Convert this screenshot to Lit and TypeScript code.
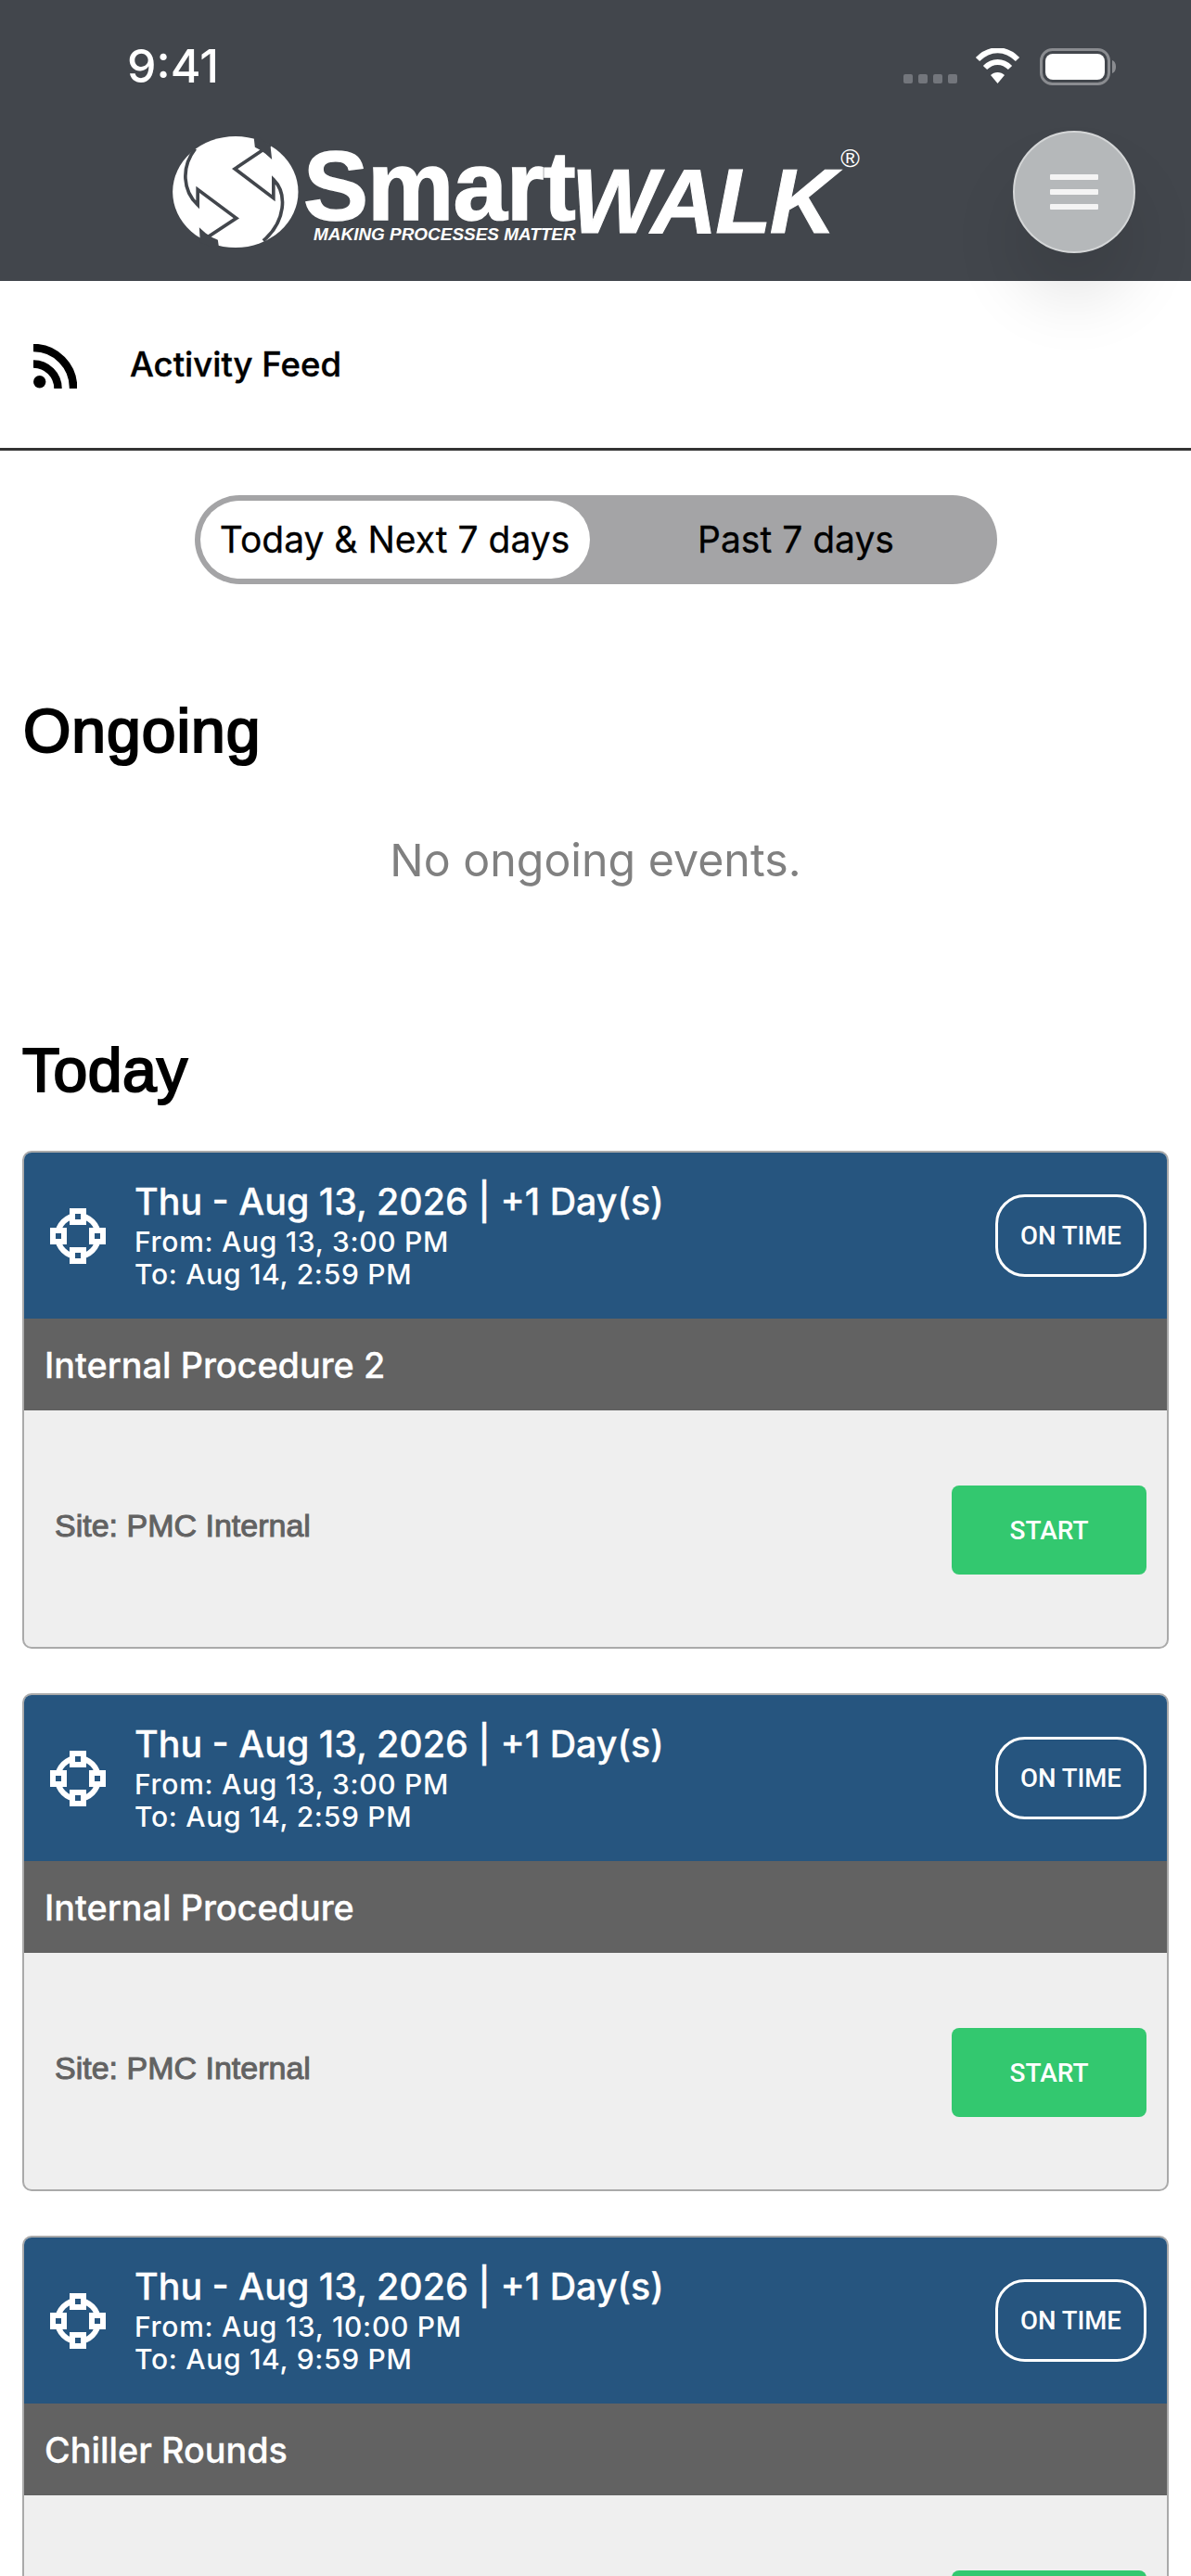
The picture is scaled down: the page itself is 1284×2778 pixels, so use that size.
import { LitElement, html, css, svg, nothing } from "lit";
import { customElement } from "lit/decorators.js";

const cards = [
  { from: "From: Aug 13, 3:00 PM", to: "To: Aug 14, 2:59 PM", name: "Internal Procedure 2", fold: false },
  { from: "From: Aug 13, 3:00 PM", to: "To: Aug 14, 2:59 PM", name: "Internal Procedure", fold: false },
  { from: "From: Aug 13, 10:00 PM", to: "To: Aug 14, 9:59 PM", name: "Chiller Rounds", fold: true },
];

const node = (x: number, y: number) => svg`
  <rect x=${x} y=${y} width="18" height="18" fill="#fff"></rect>
  <rect x=${x + 6} y=${y + 6} width="6" height="6" fill="#26557f"></rect>`;

@customElement("app-root")
export class AppRoot extends LitElement {
  static styles = css`
    :host { display: block; width: 1284px; height: 2778px; overflow: hidden; background: #fff; font-family: Inter, "Noto Sans", sans-serif; color: #000; }
    .top { position: relative; z-index: 2; height: 303px; background: #42464c; display: flex; flex-direction: column; }
    .status { height: 141px; display: flex; align-items: flex-start; padding: 41px 0 0 137px; box-sizing: border-box; }
    .time { font-size: 50px; line-height: 60px; color: #fff; font-weight: 500; }
    .status svg { margin: 11px 80px 0 auto; }
    .bar { display: flex; align-items: flex-start; padding-left: 186px; padding-right: 60px; }
    .logo { display: flex; align-items: flex-start; margin-top: 6px; }
    .word { display: flex; flex-direction: column; margin-left: 5px; font-family: "Liberation Sans", Arial, sans-serif; color: #fff; font-weight: 700; }
    .smart { font-size: 105px; line-height: 105px; height: 93px; margin-top: 1px; letter-spacing: -1px; -webkit-text-stroke: 1.5px #fff; }
    .tag { font-size: 18.95px; line-height: 20px; font-style: italic; margin: 2px 0 0 11px; white-space: nowrap; }
    .walk { font-size: 99px; line-height: 99px; font-style: italic; font-weight: 700; font-family: "Liberation Sans", Arial, sans-serif; color: #fff; letter-spacing: -2px; margin: 20px 0 0 -5px; -webkit-text-stroke: 1px #fff; }
    .reg { font-size: 28px; line-height: 28px; font-family: "Liberation Sans", Arial, sans-serif; color: #fff; margin: 10px 0 0 7px; }
    .menu { margin-left: auto; width: 132px; height: 132px; box-sizing: border-box; border-radius: 50%; background: #b5b8ba; border: 2px solid #d4d6d7; box-shadow: 0 50px 70px rgba(0,0,0,.1); display: flex; flex-direction: column; align-items: center; justify-content: center; gap: 10px; }
    .menu span { width: 52px; height: 6px; background: #f4f4f4; border-radius: 1px; }
    .feed { height: 180px; display: flex; align-items: center; border-bottom: 3px solid #333; padding-left: 36px; }
    .feed svg { margin-top: 4px; }
    .feed b { font-weight: 500; font-size: 36.5px; margin-left: 57px; -webkit-text-stroke: .4px #000; }
    .seg-wrap { display: flex; justify-content: center; padding-top: 48px; }
    .seg { width: 865px; height: 96px; box-sizing: border-box; padding: 6px; border-radius: 48px; background: #a4a4a6; display: flex; font-size: 39px; align-items: stretch; -webkit-text-stroke: .3px #000; }
    .seg div { display: flex; align-items: center; justify-content: center; padding-bottom: 2px; }
    .on { width: 420px; background: #fff; border-radius: 42px; }
    .off { flex: 1; padding-left: 12px; }
    h2 { margin: 0; font-family: "Liberation Sans", Arial, sans-serif; font-weight: 400; font-size: 66px; line-height: 80px; -webkit-text-stroke: 2.2px #000; }
    .ongoing { padding: 118px 0 0 25px; }
    .ongoing h2 { letter-spacing: 1px; }
    .none { text-align: center; font-size: 48.3px; line-height: 60px; color: #808080; margin-top: 70px; font-weight: 400; }
    .today { padding: 156px 0 0 24px; }
    .today h2 { letter-spacing: .5px; }
    .list { display: flex; flex-direction: column; gap: 48px; padding: 47px 24px 0; }
    .card { border: 2px solid #aaa; border-radius: 10px; overflow: hidden; height: 537px; box-sizing: border-box; background: #efefef; display: flex; flex-direction: column; }
    .head { height: 179px; background: #26557f; color: #fff; display: flex; align-items: center; padding: 0 22px 0 28px; flex: none; }
    .dates { margin-left: 31px; flex: 1; display: flex; flex-direction: column; margin-bottom: 4px; }
    .date { font-size: 39.4px; line-height: 52px; font-weight: 500; -webkit-text-stroke: .3px #fff; }
    .sub { font-size: 30px; line-height: 35px; font-weight: 500; letter-spacing: .7px; }
    .pill { width: 163px; height: 89px; box-sizing: border-box; border: 3px solid #fff; border-radius: 32px; display: flex; align-items: center; justify-content: center; font-family: Roboto, sans-serif; font-weight: 500; font-size: 27.5px; }
    .name { height: 99px; flex: none; background: #626262; color: #fff; display: flex; align-items: center; padding-left: 22px; font-size: 37.8px; font-weight: 500; -webkit-text-stroke: .3px #fff; }
    .body { display: flex; align-items: flex-start; justify-content: space-between; padding: 81px 22px 0 33px; }
    .site { font-family: "Liberation Sans", Arial, sans-serif; font-size: 34px; font-weight: 400; color: #626262; margin-top: 24px; -webkit-text-stroke: 1px #626262; }
    .start { width: 210px; height: 96px; margin-left: auto; border-radius: 8px; background: #33c86f; color: #fff; display: flex; align-items: center; justify-content: center; font-family: Roboto, sans-serif; font-weight: 500; font-size: 28px; }
  `;

  render() {
    return html`
      <div class="top">
        <div class="status">
          <span class="time">9:41</span>
          <svg width="230" height="42" viewBox="0 0 230 42">
            <g fill="#73767c"><rect x="0" y="28" width="10" height="10" rx="2"></rect><rect x="16" y="28" width="10" height="10" rx="2"></rect><rect x="32" y="28" width="10" height="10" rx="2"></rect><rect x="48" y="28" width="10" height="10" rx="2"></rect></g>
            <g fill="none" stroke="#fff" stroke-width="6"><path d="M80 12 C93 -1 110 -1 123 12"></path><path d="M88 21 C96 13 107 13 115 21"></path></g>
            <path d="M94 29 C98 25 105 25 109 29 L101.500 38 Z" fill="#fff"></path>
            <rect x="148.500" y="1.500" width="73" height="37" rx="12" fill="none" stroke="#8a8c90" stroke-width="3"></rect>
            <rect x="153" y="6" width="64" height="28" rx="8" fill="#fff"></rect>
            <path d="M225 13 C228 14 229 17 229 20 C229 23 228 26 225 27 Z" fill="#8a8c90"></path>
          </svg>
        </div>
        <div class="bar">
          <div class="logo">
            <svg width="136" height="120" viewBox="80 50 405 360">
              <ellipse cx="282" cy="230" rx="203" ry="180" fill="#fff"></ellipse>
              <g fill="none" stroke="#42464c" stroke-width="11">
                <path d="M395 78 L280 155 L405 250 L405 190 C450 235 445 325 372 388"></path>
                <path d="M168 392 L285 315 L160 222 L160 272 C112 228 105 150 152 90"></path>
              </g>
              <path d="M340 40 L395 80 L400 125 C380 105 365 95 345 85 Z" fill="#42464c"></path>
              <path d="M230 420 L168 392 L165 345 C185 365 200 375 225 385 Z" fill="#42464c"></path>
            </svg>
            <div class="word"><span class="smart">Smart</span><span class="tag">MAKING PROCESSES MATTER</span></div>
            <span class="walk">WALK</span>
            <span class="reg">®</span>
          </div>
          <div class="menu"><span></span><span></span><span></span></div>
        </div>
      </div>
      <div class="feed">
        <svg width="47" height="48" viewBox="0 0 47 48">
          <circle cx="6.700" cy="40.700" r="6.700" fill="#000"></circle>
          <g fill="none" stroke="#000" stroke-width="8.500"><path d="M0 21.500 A26.500 26.500 0 0 1 26.500 48"></path><path d="M0 4 A43 43 0 0 1 43 48"></path></g>
        </svg>
        <b>Activity Feed</b>
      </div>
      <div class="seg-wrap">
        <div class="seg"><div class="on">Today &amp; Next 7 days</div><div class="off">Past 7 days</div></div>
      </div>
      <div class="ongoing"><h2>Ongoing</h2></div>
      <div class="none">No ongoing events.</div>
      <div class="today"><h2>Today</h2></div>
      <div class="list">
        ${cards.map((c) => html`
          <div class="card">
            <div class="head">
              <svg width="60" height="60" viewBox="0 0 60 60">
                <circle cx="30" cy="30" r="22" fill="none" stroke="#fff" stroke-width="6"></circle>
                ${node(21, 0)}${node(0, 21)}${node(42, 21)}${node(21, 42)}
              </svg>
              <div class="dates">
                <span class="date">Thu - Aug 13, 2026 | +1 Day(s)</span>
                <span class="sub">${c.from}</span>
                <span class="sub">${c.to}</span>
              </div>
              <div class="pill">ON TIME</div>
            </div>
            <div class="name">${c.name}</div>
            <div class="body">
              ${c.fold ? nothing : html`<span class="site">Site: PMC Internal</span>`}
              <div class="start">${c.fold ? nothing : "START"}</div>
            </div>
          </div>`)}
      </div>
    `;
  }
}
